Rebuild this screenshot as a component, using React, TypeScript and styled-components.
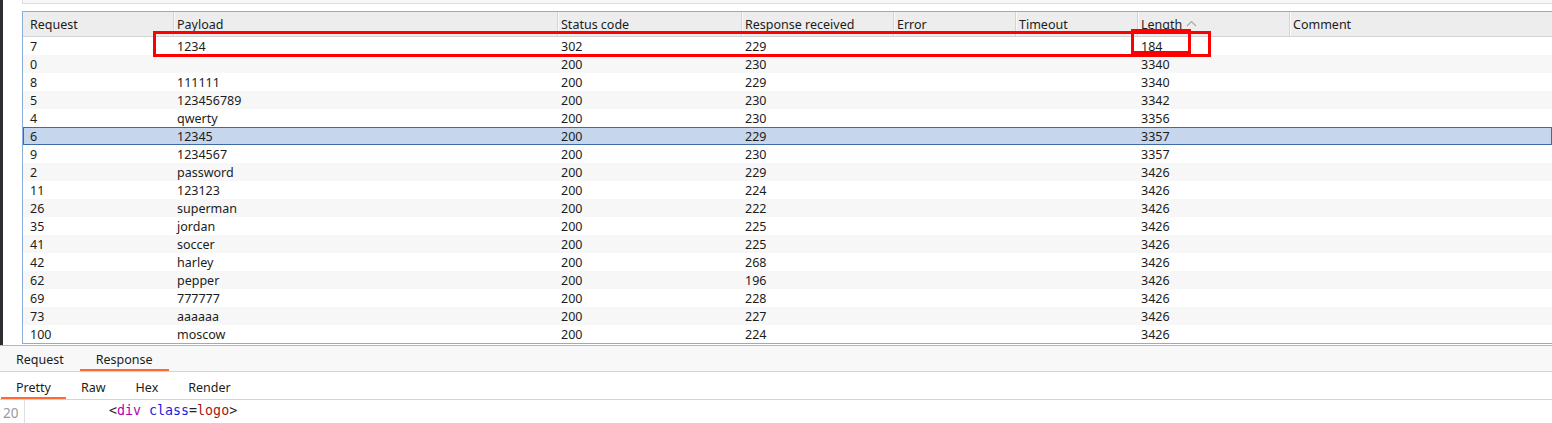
import React from 'react'
import styled, { createGlobalStyle } from 'styled-components'

const GlobalStyle = createGlobalStyle`
    html, body {
        margin: 0;
        padding: 0;
        background: #fff;
        overflow: hidden;
    }
    body {
        font-family: 'Noto Sans', sans-serif;
        font-size: 12.5px;
        color: #1c1c1c;
    }
`

const Page = styled.div`
    width: 1552px;
    height: 423px;
    display: flex;
    flex-direction: column;
    overflow: hidden;
`

const TopSection = styled.div`
    display: flex;
    height: 347px;
`

const DarkStrip = styled.div`
    width: 3px;
    background: #2c2e32;
`

const ResultsArea = styled.div`
    flex: 1;
    padding-left: 19px;
    display: flex;
    flex-direction: column;
    min-width: 0;
`

const PrevPanelEdge = styled.div`
    height: 3px;
    background: #f7f7f7;
    border-bottom: 1px solid #dedede;
    border-left: 1px solid #dedede;
    margin-bottom: 7px;
`

const Table = styled.div`
    position: relative;
    border: 1px solid #8aaedc;
    border-right: none;
`

const columns = '150px 384px 184px 152px 122px 122px 152px 1fr'

const HeaderRow = styled.div`
    display: grid;
    grid-template-columns: ${columns};
    height: 25px;
    box-sizing: border-box;
    background: #ededed;
    border-bottom: 1px solid #d3d3d3;
`

const HeaderCell = styled.div<{ $first?: boolean }>`
    display: flex;
    align-items: center;
    padding-left: ${p => (p.$first ? '7px' : '3px')};
    border-left: ${p => (p.$first ? 'none' : '1px solid #d4d4d4')};
    box-shadow: ${p => (p.$first ? 'none' : 'inset 1px 0 0 #fafafa')};
    white-space: nowrap;
`

const SortArrow = styled.svg`
    margin-left: 4px;
    margin-top: -2px;
`

const Row = styled.div<{ $alt: boolean; $selected: boolean }>`
    display: grid;
    grid-template-columns: ${columns};
    height: 18px;
    align-items: center;
    background: ${p => (p.$selected ? '#c6d6ec' : p.$alt ? '#f7f7f7' : '#fff')};
    box-shadow: ${p => (p.$selected ? 'inset 0 0 0 1px #3e6ba3' : 'none')};
`

const Cell = styled.div<{ $first?: boolean }>`
    padding-left: ${p => (p.$first ? '7px' : '4px')};
    padding-top: 1px;
    white-space: nowrap;
    line-height: 17px;
`

const Highlight = styled.div<{ $left: number; $top: number; $w: number; $h: number }>`
    position: absolute;
    left: ${p => p.$left}px;
    top: ${p => p.$top}px;
    width: ${p => p.$w}px;
    height: ${p => p.$h}px;
    box-sizing: border-box;
    border: 3px solid #ff0000;
    pointer-events: none;
`

const TabBar = styled.div<{ $bg: string; $pad: number; $start: number; $textTop: number }>`
    display: flex;
    height: 28px;
    box-sizing: border-box;
    background: ${p => p.$bg};
    border-bottom: 1px solid #d3d3d3;
    padding-left: ${p => p.$start}px;

    & > div {
        padding: ${p => p.$textTop}px ${p => p.$pad}px 0;
    }
`

const OuterTabs = styled(TabBar)`
    border-top: 1px solid #b8b8b8;
    height: 27px;
`

const Tab = styled.div<{ $active?: boolean }>`
    display: flex;
    align-items: center;
    box-sizing: border-box;
    height: 100%;
    border-bottom: 2px solid ${p => (p.$active ? '#ff6a33' : 'transparent')};
`

const Editor = styled.div`
    display: flex;
    flex: 1;
    font-family: 'DejaVu Sans Mono', monospace;
    font-size: 13.3px;
`

const Gutter = styled.div`
    width: 21px;
    padding-left: 3px;
    padding-top: 3px;
    border-right: 1px solid #e0e0e0;
    color: #9a9a9a;
    font-family: 'Noto Sans', sans-serif;
    font-size: 13.5px;
    line-height: 20px;
`

const CodeLine = styled.div`
    padding-left: 84px;
    padding-top: 1px;
    line-height: 20px;
    white-space: pre;
`

const Tok = styled.span<{ $c: string }>`
    color: ${p => p.$c};
`

const headers = ['Request', 'Payload', 'Status code', 'Response received', 'Error', 'Timeout', 'Length', 'Comment']

const rows: [string, string, string, string, string][] = [
    ['7', '1234', '302', '229', '184'],
    ['0', '', '200', '230', '3340'],
    ['8', '111111', '200', '229', '3340'],
    ['5', '123456789', '200', '230', '3342'],
    ['4', 'qwerty', '200', '230', '3356'],
    ['6', '12345', '200', '229', '3357'],
    ['9', '1234567', '200', '230', '3357'],
    ['2', 'password', '200', '229', '3426'],
    ['11', '123123', '200', '224', '3426'],
    ['26', 'superman', '200', '222', '3426'],
    ['35', 'jordan', '200', '225', '3426'],
    ['41', 'soccer', '200', '225', '3426'],
    ['42', 'harley', '200', '268', '3426'],
    ['62', 'pepper', '200', '196', '3426'],
    ['69', '777777', '200', '228', '3426'],
    ['73', 'aaaaaa', '200', '227', '3426'],
    ['100', 'moscow', '200', '224', '3426'],
]

const App: React.FC = () => {
    return (
        <Page>
            <GlobalStyle />
            <TopSection>
                <DarkStrip />
                <ResultsArea>
                    <PrevPanelEdge />
                    <Table>
                        <HeaderRow>
                            {headers.map((h, i) => (
                                <HeaderCell key={h} $first={i === 0}>
                                    {h}
                                    {h === 'Length' && (
                                        <SortArrow width="11" height="7" viewBox="0 0 11 7">
                                            <path d="M1 6 L5.5 1.5 L10 6" fill="none" stroke="#a8a8a8" strokeWidth="1.2" />
                                        </SortArrow>
                                    )}
                                </HeaderCell>
                            ))}
                        </HeaderRow>
                        {rows.map((r, i) => (
                            <Row key={r[0]} $alt={i % 2 === 1} $selected={r[0] === '6'}>
                                <Cell $first>{r[0]}</Cell>
                                <Cell>{r[1]}</Cell>
                                <Cell>{r[2]}</Cell>
                                <Cell>{r[3]}</Cell>
                                <Cell />
                                <Cell />
                                <Cell>{r[4]}</Cell>
                                <Cell />
                            </Row>
                        ))}
                        {/* annotation boxes drawn over the table */}
                        <Highlight $left={130} $top={19} $w={1058} $h={26} />
                        <Highlight $left={1108} $top={17} $w={60} $h={25} />
                    </Table>
                </ResultsArea>
            </TopSection>
            <OuterTabs $bg="#f8f8f8" $pad={16} $start={0} $textTop={4}>
                <Tab>Request</Tab>
                <Tab $active>Response</Tab>
            </OuterTabs>
            <TabBar $bg="#fff" $pad={15} $start={1} $textTop={5}>
                <Tab $active>Pretty</Tab>
                <Tab>Raw</Tab>
                <Tab>Hex</Tab>
                <Tab>Render</Tab>
            </TabBar>
            <Editor>
                <Gutter>20</Gutter>
                <CodeLine>
                    <Tok $c="#222">&lt;</Tok>
                    <Tok $c="#b000b0">div</Tok>
                    <Tok $c="#222"> </Tok>
                    <Tok $c="#1c1ce0">class</Tok>
                    <Tok $c="#222">=</Tok>
                    <Tok $c="#a31515">logo</Tok>
                    <Tok $c="#222">&gt;</Tok>
                </CodeLine>
            </Editor>
        </Page>
    )
}

export default App
